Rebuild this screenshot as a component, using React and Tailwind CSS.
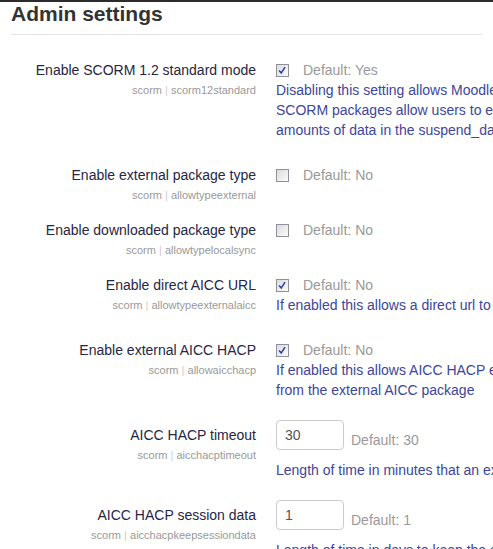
import React from "react";

const Checkbox = ({ checked }) => (
  <span className="relative inline-flex h-[13px] w-[13px] shrink-0 items-center justify-center border border-[#8f8f9d] bg-gradient-to-br from-[#dcdcdc] to-[#fbfbfb]">
    {checked && (
      <svg viewBox="0 0 13 13" className="absolute inset-0 h-[11px] w-[11px]">
        <path d="M2.5 6.5 L5 9.5 L9.5 2.5" fill="none" stroke="#2b3f9e" strokeWidth="1.8" />
      </svg>
    )}
  </span>
);

const Label = ({ title, name, offset = "" }) => (
  <div className={`w-[256px] shrink-0 text-right ${offset}`}>
    <div className="text-[14px] leading-[20px] text-[#262645]">{title}</div>
    <div className="text-[11px] leading-[20px] text-[#999]">
      scorm <span className="text-[#ccc]">|</span> {name}
    </div>
  </div>
);

const Desc = ({ lines }) => (
  <div className="text-[14px] leading-[20px] text-[#3b469c]">
    {lines.map((l) => (
      <div key={l} className="whitespace-nowrap">
        {l}
      </div>
    ))}
  </div>
);

const CheckRow = ({ title, name, checked, def, lines, className = "" }) => (
  <div className={`flex gap-5 ${className}`}>
    <Label title={title} name={name} />
    <div>
      <div className="flex h-5 items-center gap-[14px]">
        <Checkbox checked={checked} />
        <span className="text-[14px] text-[#999]">Default: {def}</span>
      </div>
      {lines && <Desc lines={lines} />}
    </div>
  </div>
);

const TextRow = ({ title, name, value, def, lines, className = "" }) => (
  <div className={`flex gap-5 ${className}`}>
    <Label title={title} name={name} offset="pt-[5px]" />
    <div>
      <div className="flex items-end gap-[7px]">
        <div className="flex h-[30px] w-[68px] items-center rounded-[4px] border border-[#ccc] px-[8px] text-[14px] text-[#555]">
          {value}
        </div>
        <span className="text-[14px] leading-[20px] text-[#999]">Default: {def}</span>
      </div>
      <div className="mt-[10px]">
        <Desc lines={lines} />
      </div>
    </div>
  </div>
);

export default function App() {
  return (
    <div
      className="h-[549px] w-[493px] overflow-hidden bg-white"
      style={{ fontFamily: '"Liberation Sans", Arial, sans-serif' }}
    >
      <div className="h-[2px] bg-[#2b2b2b]" />
      <div className="px-[11px]">
        <h2 className="text-[21px] font-bold leading-[24px] text-[#333]">Admin settings</h2>
        <div className="mt-[8px] border-t border-[#e3e3e3]" />
      </div>
      <div className="pt-[25px]">
        <CheckRow
          title="Enable SCORM 1.2 standard mode"
          name="scorm12standard"
          checked
          def="Yes"
          lines={[
            "Disabling this setting allows Moodle to store more data than the",
            "SCORM packages allow users to exceed the SCORM 1.2 limits",
            "amounts of data in the suspend_data field.",
          ]}
          className="mb-[25px]"
        />
        <CheckRow
          title="Enable external package type"
          name="allowtypeexternal"
          def="No"
          className="mb-[15px]"
        />
        <CheckRow
          title="Enable downloaded package type"
          name="allowtypelocalsync"
          def="No"
          className="mb-[15px]"
        />
        <CheckRow
          title="Enable direct AICC URL"
          name="allowtypeexternalaicc"
          checked
          def="No"
          lines={["If enabled this allows a direct url to a single AICC package"]}
          className="mb-[25px]"
        />
        <CheckRow
          title="Enable external AICC HACP"
          name="allowaicchacp"
          checked
          def="No"
          lines={["If enabled this allows AICC HACP external communication", "from the external AICC package"]}
          className="mb-[20px]"
        />
        <TextRow
          title="AICC HACP timeout"
          name="aicchacptimeout"
          value="30"
          def="30"
          lines={["Length of time in minutes that an external AICC HACP session"]}
          className="mb-[20px]"
        />
        <TextRow
          title="AICC HACP session data"
          name="aicchacpkeepsessiondata"
          value="1"
          def="1"
          lines={["Length of time in days to keep the external AICC HACP session data"]}
        />
      </div>
    </div>
  );
}
